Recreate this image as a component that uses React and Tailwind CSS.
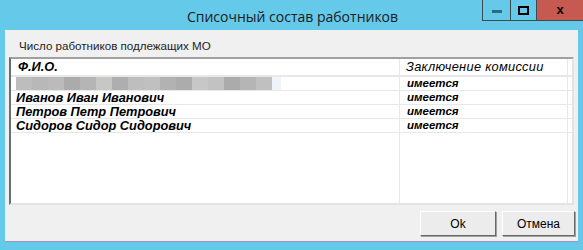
import React from "react";

const blurColors = [
  "#bdbdbd", "#b8b8b8", "#bbbbbb", "#ababab", "#b5b5b5", "#c7c7c5", "#aeaeae", "#bebebe",
  "#c0c0c0", "#b2b2b2", "#acacac", "#c7c7c7", "#c2c2c2", "#ababab", "#b5b5b5", "#c0c0c0",
];

const workers = [
  "Иванов Иван Иванович",
  "Петров Петр Петрович",
  "Сидоров Сидор Сидорович",
];

const Row = ({ children, status }) => (
  <div className="flex h-[14px] border-b border-[#e8e8e8]">
    <div className="w-[389px] flex items-center pl-[5px] border-r border-[#e8e8e8] overflow-hidden">
      {children}
    </div>
    <div className="w-[168px] flex items-center pl-[7px] border-r border-[#e8e8e8] font-bold italic text-[11.5px]">
      {status}
    </div>
  </div>
);

const WinButton = ({ children }) => (
  <button className="w-full h-[25px] bg-[#ececec] border border-t-white border-l-white border-r-[#696969] border-b-[#696969] shadow-[1px_1px_0_#a0a0a0] text-[12px] text-black flex items-center justify-center">
    {children}
  </button>
);

export default function App() {
  return (
    <div
      className="w-[583px] h-[250px] bg-[#65c9ea] flex flex-col overflow-hidden"
      style={{ fontFamily: '"Liberation Sans", Arial, sans-serif' }}
    >
      {/* Title bar */}
      <div className="relative h-[30px] shrink-0 flex items-center justify-center">
        <span
          className="text-[14px] text-[#1b1b1b] pt-[2px] pl-[2px]"
          style={{ fontFamily: '"Open Sans", "Noto Sans", sans-serif' }}
        >
          Списочный состав работников
        </span>
        <div className="absolute top-0 right-0 flex h-[21px] border-l border-b border-[#3c4a52]">
          <div className="w-[28px] flex items-center justify-center border-r border-[#3c4a52]">
            <div className="w-[10px] h-[3px] bg-[#2b6a80] mt-[3px]" />
          </div>
          <div className="w-[26px] flex items-center justify-center border-r border-[#3c4a52]">
            <div className="w-[11px] h-[9px] border-2 border-black" />
          </div>
          <div className="w-[46px] bg-[#c75a50] flex items-center justify-center text-[13px] font-bold text-black">
            x
          </div>
        </div>
      </div>

      {/* Client area */}
      <div className="mx-[5px] h-[212px] bg-[#f0f0f0] border-b border-[#a08fb8] flex flex-col">
        <div className="h-[27px] flex items-center pl-[14px] pt-[4px] text-[11.6px] text-[#1e1e1e]">
          Число работников подлежащих МО
        </div>

        {/* Grid */}
        <div className="ml-[4px] w-[565px] h-[148px] bg-white border-2 border-t-[#a0a0a0] border-l-[#6d6d6d] border-r-[#e3e3e3] border-b-[#e3e3e3] flex flex-col text-[12.8px] text-black">
          <div className="flex h-[18px] border-b-2 border-[#e8e8e8]">
            <div className="w-[389px] flex items-center pl-[7px] border-r border-[#e8e8e8] font-bold italic">
              Ф.И.О.
            </div>
            <div className="w-[168px] flex items-center pl-[6px] border-r border-[#e8e8e8] italic tracking-[0.3px]">
              Заключение комиссии
            </div>
          </div>
          <Row status="имеется">
            <div className="flex h-[13px]">
              {blurColors.map((c, i) => (
                <div key={i} className="w-[16px] h-full" style={{ backgroundColor: c }} />
              ))}
              <div className="w-[9px] h-full bg-[#f0f4fa]" />
            </div>
          </Row>
          {workers.map((w) => (
            <Row key={w} status="имеется">
              <span className="font-bold italic whitespace-nowrap">{w}</span>
            </Row>
          ))}
          <div className="flex-1 flex">
            <div className="w-[389px] border-r border-[#e8e8e8]" />
            <div className="w-[168px] border-r border-[#e8e8e8]" />
          </div>
        </div>

        {/* Buttons */}
        <div className="flex justify-end gap-[6px] pr-[3px] pt-[6px]">
          <div className="w-[76px]">
            <WinButton>Ok</WinButton>
          </div>
          <div className="w-[73px]">
            <WinButton>Отмена</WinButton>
          </div>
        </div>
      </div>
    </div>
  );
}
